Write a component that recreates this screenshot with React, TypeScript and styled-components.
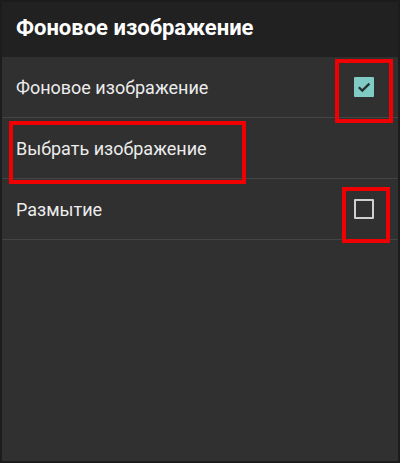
import styled, { createGlobalStyle } from 'styled-components'

const GlobalStyle = createGlobalStyle`
  html, body {
    margin: 0;
    padding: 0;
    background: #303030;
  }
  body {
    font-family: Roboto, 'Noto Sans', sans-serif;
  }
`

interface CheckProps {
  checked: boolean
}

interface MarkProps {
  left: number
  top: number
  width: number
  height: number
}

const items = [
  { label: 'Фоновое изображение', check: true },
  { label: 'Выбрать изображение' },
  { label: 'Размытие', check: false },
]

const marks: MarkProps[] = [
  { left: 333, top: 57, width: 58, height: 64 },
  { left: 7, top: 119, width: 237, height: 63 },
  { left: 340, top: 185, width: 48, height: 56 },
]

const CheckBox = ({ checked }: CheckProps) => (
  <Box checked={checked}>
    {checked && (
      <svg width='20' height='20' viewBox='0 0 20 20'>
        <path d='M4.8 10.2 L8.3 13.6 L15.4 6.6' fill='none' stroke='#26302f' strokeWidth='2.2' />
      </svg>
    )}
  </Box>
)

export default function App() {
  return (
    <Screen>
      <GlobalStyle />
      <Header>Фоновое изображение</Header>
      <List>
        {items.map((item) => (
          <Row key={item.label}>
            <Label>{item.label}</Label>
            {item.check !== undefined && <CheckBox checked={item.check} />}
          </Row>
        ))}
      </List>
      {marks.map((m, i) => (
        <Mark key={i} style={{ left: m.left, top: m.top, width: m.width, height: m.height }} />
      ))}
    </Screen>
  )
}

const Screen = styled.div`
  position: relative;
  width: 400px;
  height: 463px;
  box-sizing: border-box;
  border: 2px solid #1c1c1c;
  background: #303030;
  overflow: hidden;
`

const Header = styled.div`
  height: 55px;
  background: #212121;
  color: #fff;
  font-size: 22px;
  font-weight: 700;
  display: flex;
  align-items: center;
  padding: 0 14px 4px;
  box-sizing: border-box;
`

const List = styled.div`
  display: flex;
  flex-direction: column;
`

const Row = styled.div`
  height: 61px;
  display: flex;
  align-items: center;
  justify-content: space-between;
  padding: 0 24px 0 14px;
  border-bottom: 1px solid #444;
  box-sizing: border-box;
`

const Label = styled.span`
  color: #ececec;
  font-size: 18px;
`

const Box = styled.div<CheckProps>`
  width: 20px;
  height: 20px;
  box-sizing: border-box;
  display: flex;
  align-items: center;
  justify-content: center;
  background: ${({ checked }) => (checked ? '#80cbc4' : 'transparent')};
  border: ${({ checked }) => (checked ? 'none' : '2px solid #d0d0d0')};
  border-radius: 1px;
`

const Mark = styled.div`
  position: absolute;
  box-sizing: border-box;
  border: 4px solid #f00000;
`
